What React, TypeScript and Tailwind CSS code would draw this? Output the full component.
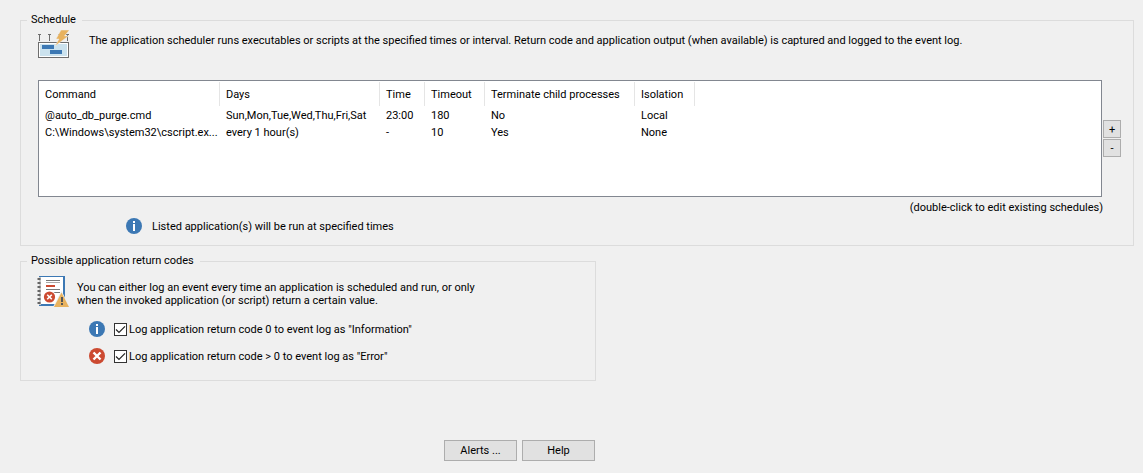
import { useState, type ReactNode } from "react";

const columns = [
  { name: "Command", width: "w-[181px]" },
  { name: "Days", width: "w-40" },
  { name: "Time", width: "w-[45px]" },
  { name: "Timeout", width: "w-[60px]" },
  { name: "Terminate child processes", width: "w-[150px]" },
  { name: "Isolation", width: "w-[60px]" },
];

const schedules = [
  ["@auto_db_purge.cmd", "Sun,Mon,Tue,Wed,Thu,Fri,Sat", "23:00", "180", "No", "Local"],
  ["C:\\Windows\\system32\\cscript.ex...", "every 1 hour(s)", "-", "10", "Yes", "None"],
];

function SchedulerIcon() {
  return (
    <svg className="h-8 w-8 shrink-0" viewBox="0 0 32 32" aria-hidden="true">
      <g fill="#6e6e6e">
        <path d="M1 5h3v1H3v6H2V6H1zM11 5h3v1h-1v6h-1V6h-1zM21 5h3v1h-1v6h-1V6h-1zM29 5h3v1h-1v6h-1V6h-1z" />
        <path d="M1 13h31v16H1z" />
      </g>
      <path d="M2 14h29v14H2z" fill="#fff" />
      <path d="M3 15h27v12H3z" fill="#cbe2ee" />
      <path d="M5 16h12v4H5zM13 21h12v4H13z" fill="#3c78b4" />
      <path d="M24 1h8.500l-5 6h4L18 17l4-7h-3z" fill="#e8b25e" stroke="#efefef" strokeWidth="0.5" />
    </svg>
  );
}

function LogIcon() {
  return (
    <svg className="h-8 w-8 shrink-0" viewBox="0 0 32 32" aria-hidden="true">
      <path d="M2 1h26v30H2z" fill="#3c78b4" />
      <path d="M3 2h23v27H3z" fill="#fff" />
      <path d="M2 2h2v28H2z" fill="#c8c8c8" />
      <path d="M2 3v28" stroke="#666" strokeWidth="3" strokeDasharray="2 2" />
      <path d="M9 5.500h14M9 14.500h14M11 17.500h12" stroke="#777" />
      <path d="M9 7.500h14" stroke="#aaa" />
      <path d="M9 10h9v2H9z" fill="#cc4a31" />
      <circle cx="12.500" cy="22" r="6.500" fill="#fff" />
      <circle cx="12.500" cy="22" r="5.600" fill="#cc4a31" />
      <path d="m10.200 19.700 4.600 4.600m0-4.600-4.600 4.600" stroke="#fff" strokeWidth="1.600" />
      <path d="m24.500 15.500 8 16.500H16z" fill="#efefef" />
      <path d="m24.500 17.500 7.500 14.500H17z" fill="#e8b25e" />
      <path d="M24 22h2v5h-2zM24 28h2v2h-2z" fill="#555" />
    </svg>
  );
}

function InfoIcon() {
  return (
    <svg className="h-4 w-4 shrink-0" viewBox="0 0 16 16" aria-hidden="true">
      <circle cx="8" cy="8" r="8" fill="#3c78b4" />
      <path d="M7 3h2v2H7zM7 6h2v7H7z" fill="#fff" />
    </svg>
  );
}

function ErrorIcon() {
  return (
    <svg className="h-4 w-4 shrink-0" viewBox="0 0 16 16" aria-hidden="true">
      <circle cx="8" cy="8" r="8" fill="#cc4a31" />
      <path d="m4.500 4.500 7 7m0-7-7 7" stroke="#fff" strokeWidth="2.400" />
    </svg>
  );
}

function GroupBox({ title, className, children }: { title: string; className: string; children: ReactNode }) {
  return (
    <fieldset className="border border-[#dcdcdc]">
      <legend className="ml-1.5 h-3.5 pr-1.5 pl-1 leading-[14px]">{title}</legend>
      <div className={className}>{children}</div>
    </fieldset>
  );
}

function LogOption({ icon, label }: { icon: ReactNode; label: string }) {
  const [checked, setChecked] = useState(true);
  return (
    <div className="flex items-center gap-[9px]">
      {icon}
      <label className="flex items-center gap-0.5">
        <span className="relative h-[13px] w-[13px]">
          <input
            type="checkbox"
            checked={checked}
            onChange={(e) => setChecked(e.target.checked)}
            className="block h-[13px] w-[13px] appearance-none border border-[#333] bg-white"
          />
          {checked && (
            <svg className="pointer-events-none absolute inset-0" viewBox="0 0 13 13" aria-hidden="true">
              <path d="m2 6.500 3 3 6-6.200" fill="none" stroke="#222" strokeWidth="1.200" />
            </svg>
          )}
        </span>
        {label}
      </label>
    </div>
  );
}

const buttonStyle = "flex items-center justify-center border border-[#adadad] bg-[#e1e1e1] hover:border-[#0078d7]";

export default function App() {
  return (
    <main className="min-h-screen bg-[#f0f0f0] pt-[13px] pr-[9px] pl-5 font-[Roboto,sans-serif] text-[11px] leading-[13px] text-black">
      <GroupBox title="Schedule" className="pr-3 pb-[11px] pl-4">
        <div className="flex items-start gap-5 pt-0.5">
          <SchedulerIcon />
          <p className="pt-[5px]">
            The application scheduler runs executables or scripts at the specified times or interval. Return code and
            application output (when available) is captured and logged to the event log.
          </p>
        </div>
        <div className="mt-[19px] ml-px flex items-center gap-px">
          <div className="h-[117px] flex-1 overflow-hidden border border-[#828790] bg-white">
            <table className="w-[656px] table-fixed border-collapse text-left whitespace-nowrap">
              <thead>
                <tr className="h-[26px]">
                  {columns.map((c) => (
                    <th key={c.name} className={`${c.width} p-0 font-normal`}>
                      <div className="flex h-6 items-center border-r border-[#e5e5e5] pl-1.5">{c.name}</div>
                    </th>
                  ))}
                </tr>
              </thead>
              <tbody>
                {schedules.map((row) => (
                  <tr key={row[0]} className="h-[17px]">
                    {row.map((cell, i) => (
                      <td key={i} className="overflow-hidden p-0 pl-1.5">
                        {cell}
                      </td>
                    ))}
                  </tr>
                ))}
              </tbody>
            </table>
          </div>
          <div className="flex flex-col gap-px">
            <button type="button" aria-label="Add schedule" className={`${buttonStyle} h-[18px] w-[18px]`}>
              +
            </button>
            <button type="button" aria-label="Remove schedule" className={`${buttonStyle} h-[18px] w-[18px]`}>
              -
            </button>
          </div>
        </div>
        <p className="mt-1 pr-[18px] text-right">(double-click to edit existing schedules)</p>
        <div className="mt-1 flex items-center gap-2.5 pl-[89px]">
          <InfoIcon />
          <p>Listed application(s) will be run at specified times</p>
        </div>
      </GroupBox>

      <div className="mt-2 w-[576px] max-w-full">
        <GroupBox title="Possible application return codes" className="pb-4 pl-4">
          <div className="flex items-start gap-2 pt-[7px]">
            <LogIcon />
            <p className="pt-1.5">
              You can either log an event every time an application is scheduled and run, or only
              <br />
              when the invoked application (or script) return a certain value.
            </p>
          </div>
          <div className="mt-3.5 flex flex-col gap-[11px] pl-[52px]">
            <LogOption icon={<InfoIcon />} label={'Log application return code 0 to event log as "Information"'} />
            <LogOption icon={<ErrorIcon />} label={'Log application return code > 0 to event log as "Error"'} />
          </div>
        </GroupBox>
        <div className="mt-[59px] flex justify-end gap-[5px] pr-px">
          <button type="button" className={`${buttonStyle} h-[21px] w-[73px]`}>
            Alerts ...
          </button>
          <button type="button" className={`${buttonStyle} h-[21px] w-[73px]`}>
            Help
          </button>
        </div>
      </div>
    </main>
  );
}
